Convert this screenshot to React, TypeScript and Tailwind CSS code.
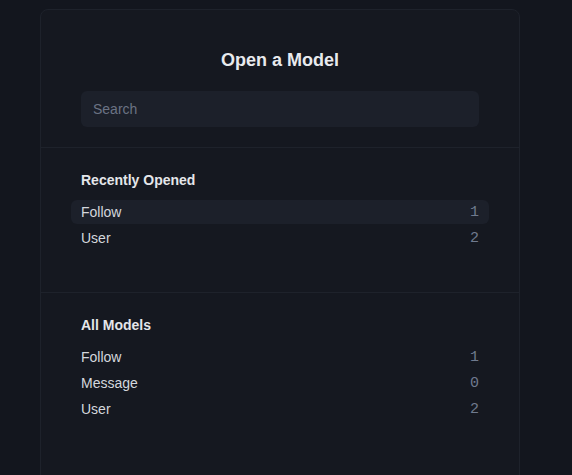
const recent = [
  { name: 'Follow', count: 1, active: true },
  { name: 'User', count: 2 },
]

const all = [
  { name: 'Follow', count: 1 },
  { name: 'Message', count: 0 },
  { name: 'User', count: 2 },
]

function ModelRow({ name, count, active }: { name: string; count: number; active?: boolean }) {
  return (
    <div
      className={`-mx-2.5 flex h-6 items-center justify-between rounded-md px-2.5 ${
        active ? 'bg-[#1c202a]' : ''
      }`}
    >
      <span className="text-sm text-[#d4d7dd]">{name}</span>
      <span className="pt-0.5 font-['Liberation_Mono',monospace] text-[15px] leading-5 text-[#6f7a8e]">{count}</span>
    </div>
  )
}

function Section({ title, items }: { title: string; items: { name: string; count: number; active?: boolean }[] }) {
  return (
    <div className="border-t border-[#1e222b] px-10 pt-[22px] pb-[42px]">
      <h2 className="mb-2.5 text-sm leading-5 font-bold text-[#e4e6ea]">{title}</h2>
      <div className="flex flex-col gap-0.5">
        {items.map((m) => (
          <ModelRow key={m.name} {...m} />
        ))}
      </div>
    </div>
  )
}

export default function App() {
  return (
    <div className="min-h-screen bg-[#13161e] pt-[9px] pl-10 font-['Liberation_Sans',Arial,sans-serif]">
      <div className="h-[480px] w-[480px] rounded-lg border border-[#1e222b] bg-[#151820]">
        <div className="px-10 pt-9 pb-5">
          <h1 className="text-center text-lg leading-7 font-bold text-[#e8eaee]">Open a Model</h1>
          <input
            placeholder="Search"
            className="mt-[17px] h-9 w-full rounded-md bg-[#1c202a] px-3 text-sm text-[#d4d7dd] outline-none placeholder:text-[#6b7384]"
          />
        </div>
        <Section title="Recently Opened" items={recent} />
        <Section title="All Models" items={all} />
      </div>
    </div>
  )
}
